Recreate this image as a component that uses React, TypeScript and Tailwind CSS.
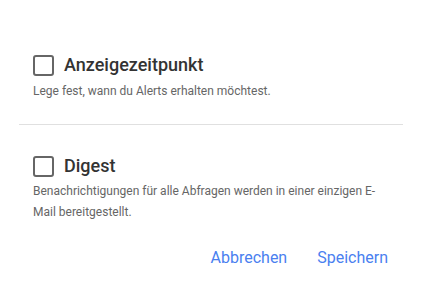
import React from 'react';

const Box: React.FC = () => (
  <span className="block w-[21px] h-[21px] border-2 border-[#666] rounded-[3px] shrink-0"></span>
);

const App: React.FC = () => {
  return (
    <div className="w-[423px] h-[295px] bg-white font-['Roboto',sans-serif] overflow-hidden">
      {/* Anzeigezeitpunkt */}
      <div className="pl-[33px] pt-[53px]">
        <label className="flex items-center gap-[10px]">
          <Box />
          <span className="text-[18px] font-medium text-[#333] leading-[24px]">Anzeigezeitpunkt</span>
        </label>
        <p className="mt-[4px] text-[12px] text-[#666] leading-[20px]">
          Lege fest, wann du Alerts erhalten möchtest.
        </p>
      </div>

      <div className="ml-[19px] mr-[20px] mt-[23px] h-px bg-[#e0e0e0]"></div>

      {/* Digest */}
      <div className="pl-[33px] pt-[29px]">
        <label className="flex items-center gap-[10px]">
          <Box />
          <span className="text-[18px] font-medium text-[#333] leading-[24px]">Digest</span>
        </label>
        <p className="mt-[3px] text-[12px] text-[#666] leading-[21px] w-[345px]">
          Benachrichtigungen für alle Abfragen werden in einer einzigen E-Mail bereitgestellt.
        </p>
      </div>

      <div className="flex justify-end gap-[14px] pr-[27px] mt-[25px]">
        <button className="px-2 text-[16px] text-[#4a7ff0] leading-[20px]">Abbrechen</button>
        <button className="px-2 text-[16px] text-[#4a7ff0] leading-[20px]">Speichern</button>
      </div>
    </div>
  );
};

export default App;
